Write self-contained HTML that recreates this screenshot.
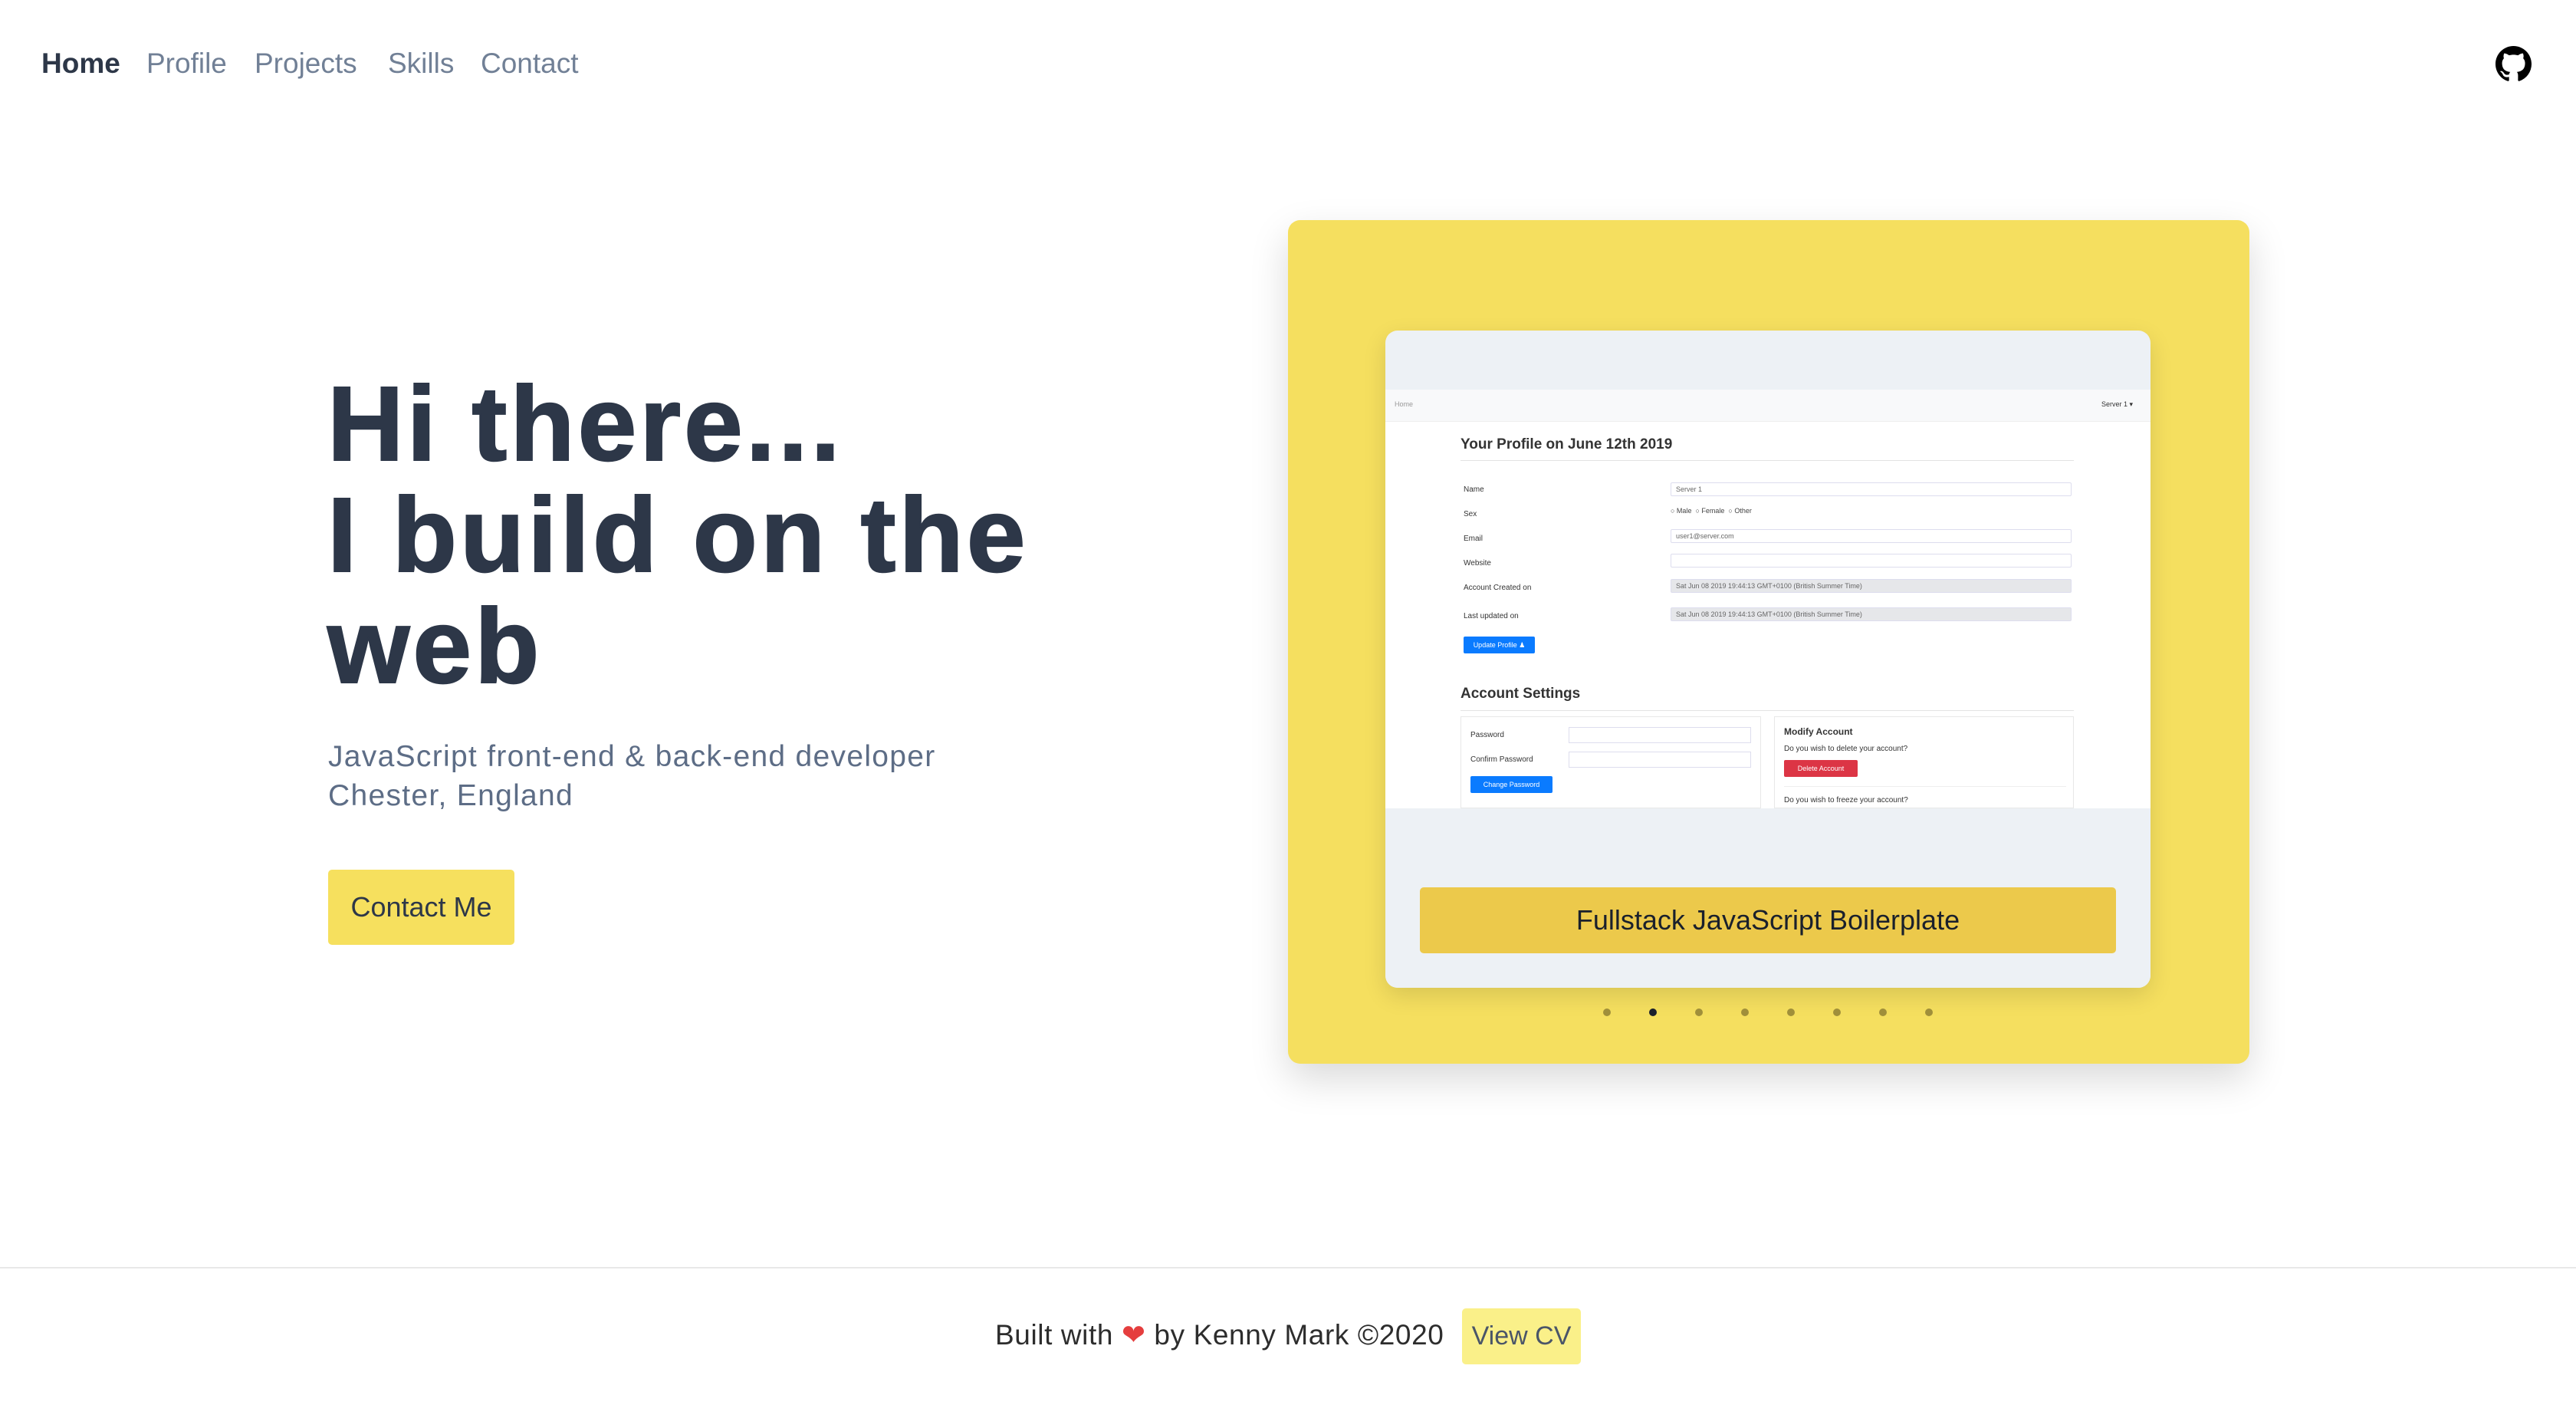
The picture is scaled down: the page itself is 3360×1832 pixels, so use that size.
<!DOCTYPE html>
<html><head><meta charset="utf-8"><style>
*{margin:0;padding:0;box-sizing:border-box}
body{width:3360px;height:1832px;position:relative;background:#fff;font-family:"Liberation Sans",sans-serif;overflow:hidden;color:#2d3748}
.a{position:absolute;white-space:nowrap}
.nav{top:62px;font-size:37px;color:#718096}
h1{position:absolute;left:427px;top:481px;font-size:138px;line-height:145px;font-weight:bold;color:#2d3748;letter-spacing:4px;-webkit-text-stroke:2px #2d3748}
.sub{left:428px;font-size:39px;color:#5d6d86;letter-spacing:1.3px}
.ss{position:absolute;font-family:"Liberation Sans",sans-serif;color:#444}
.lbl{font-size:10px;color:#333}
.inp{position:absolute;left:2179px;width:523px;height:18px;border:1px solid #dde;background:#fff;border-radius:2px;font-size:9px;color:#666;padding:3px 6px}
.dis{background:#e6e7ea}
.dot{position:absolute;top:1315px;width:10px;height:10px;border-radius:50%;background:#a08f3a}
</style></head><body>
<div class="a nav" style="left:54px;color:#2d3748;font-weight:bold">Home</div>
<div class="a nav" style="left:191px">Profile</div>
<div class="a nav" style="left:332px">Projects</div>
<div class="a nav" style="left:506px">Skills</div>
<div class="a nav" style="left:627px">Contact</div>
<svg class="a" style="left:3255px;top:60px" width="47" height="47" viewBox="0 0 16 16"><path fill="#000" d="M8 0C3.58 0 0 3.58 0 8c0 3.54 2.29 6.530 5.47 7.59.4.07.55-.17.55-.38 0-.19-.01-.82-.01-1.49-2.01.37-2.530-.49-2.69-.94-.09-.23-.48-.94-.82-1.13-.28-.15-.68-.52-.01-.53.63-.01 1.08.58 1.23.82.72 1.21 1.87.87 2.33.66.07-.52.28-.87.51-1.07-1.78-.2-3.64-.89-3.64-3.95 0-.87.31-1.59.82-2.15-.08-.2-.36-1.02.08-2.12 0 0 .67-.21 2.2.82.64-.18 1.32-.27 2-.27.68 0 1.36.09 2 .27 1.53-1.04 2.2-.82 2.2-.82.44 1.1.16 1.92.08 2.12.51.56.82 1.27.82 2.15 0 3.07-1.87 3.75-3.65 3.95.29.25.54.73.54 1.48 0 1.07-.01 1.93-.01 2.2 0 .21.15.46.55.38A8.013 8.013 0 0016 8c0-4.42-3.58-8-8-8z"/></svg>

<h1>Hi there...<br>I build on the<br>web</h1>
<div class="a sub" style="top:965px">JavaScript front-end &amp; back-end developer</div>
<div class="a sub" style="top:1016px">Chester, England</div>
<div class="a" style="left:428px;top:1134px;width:243px;height:98px;background:#f6e05e;border-radius:5px;font-size:36px;line-height:98px;text-align:center;color:#2d3748">Contact Me</div>

<div class="a" style="left:1680px;top:287px;width:1254px;height:1100px;background:#f5df5f;border-radius:16px;box-shadow:0 20px 50px rgba(0,0,0,0.15)"></div>
<div class="a" style="left:1807px;top:431px;width:998px;height:857px;background:#edf1f5;border-radius:16px;overflow:hidden;box-shadow:0 10px 30px rgba(0,0,0,0.12)">
  <div style="position:absolute;left:0;top:77px;width:998px;height:546px;background:#fff">
    <div style="height:42px;background:#f8f9fa;border-bottom:1px solid #eee"></div>
  </div>
</div>
<div class="ss" style="left:1819px;top:522px;font-size:9px;color:#999">Home</div>
<div class="ss" style="left:2741px;top:522px;font-size:9px;color:#333">Server 1 ▾</div>
<div class="ss" style="left:1905px;top:569px;font-size:19px;font-weight:bold;color:#333">Your Profile on June 12th 2019</div>
<div class="a" style="left:1905px;top:600px;width:800px;height:1px;background:#e3e3e3"></div>
<div class="ss lbl" style="left:1909px;top:633px">Name</div>
<div class="ss lbl" style="left:1909px;top:665px">Sex</div>
<div class="ss lbl" style="left:1909px;top:697px">Email</div>
<div class="ss lbl" style="left:1909px;top:729px">Website</div>
<div class="ss lbl" style="left:1909px;top:761px">Account Created on</div>
<div class="ss lbl" style="left:1909px;top:798px">Last updated on</div>
<div class="inp" style="top:629px">Server 1</div>
<div class="ss" style="left:2179px;top:661px;font-size:9px">○ Male &nbsp;○ Female &nbsp;○ Other</div>
<div class="inp" style="top:690px">user1@server.com</div>
<div class="inp" style="top:722px"></div>
<div class="inp dis" style="top:755px">Sat Jun 08 2019 19:44:13 GMT+0100 (British Summer Time)</div>
<div class="inp dis" style="top:792px">Sat Jun 08 2019 19:44:13 GMT+0100 (British Summer Time)</div>
<div class="a" style="left:1909px;top:830px;width:93px;height:22px;background:#0a7bff;border-radius:2px;color:#fff;font-size:9px;line-height:22px;text-align:center">Update Profile ♟</div>
<div class="ss" style="left:1905px;top:894px;font-size:19px;font-weight:bold;color:#333">Account Settings</div>
<div class="a" style="left:1905px;top:926px;width:800px;height:1px;background:#e3e3e3"></div>
<div class="a" style="left:1905px;top:934px;width:392px;height:120px;border:1px solid #e8e8e8"></div>
<div class="a" style="left:2314px;top:934px;width:391px;height:120px;border:1px solid #e8e8e8"></div>
<div class="ss lbl" style="left:1918px;top:953px">Password</div>
<div class="ss lbl" style="left:1918px;top:985px">Confirm Password</div>
<div class="a" style="left:2046px;top:948px;width:238px;height:21px;border:1px solid #dde"></div>
<div class="a" style="left:2046px;top:980px;width:238px;height:21px;border:1px solid #dde"></div>
<div class="a" style="left:1918px;top:1012px;width:107px;height:22px;background:#0a7bff;border-radius:2px;color:#fff;font-size:9px;line-height:22px;text-align:center">Change Password</div>
<div class="ss" style="left:2327px;top:947px;font-size:12px;font-weight:bold;color:#333">Modify Account</div>
<div class="ss lbl" style="left:2327px;top:971px">Do you wish to delete your account?</div>
<div class="a" style="left:2327px;top:991px;width:96px;height:22px;background:#dc3545;border-radius:2px;color:#fff;font-size:9px;line-height:22px;text-align:center">Delete Account</div>
<div class="a" style="left:2327px;top:1025px;width:368px;height:1px;background:#eee"></div>
<div class="ss lbl" style="left:2327px;top:1038px">Do you wish to freeze your account?</div>
<div class="a" style="left:1807px;top:1054px;width:998px;height:234px;background:#edf1f5;border-radius:0 0 16px 16px"></div>
<div class="a" style="left:1852px;top:1157px;width:908px;height:86px;background:#ecc94b;border-radius:5px;font-size:36px;line-height:86px;text-align:center;color:#1a202c">Fullstack JavaScript Boilerplate</div>
<div class="dot" style="left:2091px"></div><div class="dot" style="left:2151px;background:#1a202c"></div><div class="dot" style="left:2211px"></div><div class="dot" style="left:2271px"></div><div class="dot" style="left:2331px"></div><div class="dot" style="left:2391px"></div><div class="dot" style="left:2451px"></div><div class="dot" style="left:2511px"></div>

<div class="a" style="left:0;top:1652px;width:3360px;height:2px;background:#e8e8e8"></div>
<div class="a" style="left:1298px;top:1719px;font-size:37px;color:#2d2d2d;letter-spacing:0.6px">Built with <span style="color:#e53e3e">❤</span> by Kenny Mark ©2020</div>
<div class="a" style="left:1907px;top:1706px;width:155px;height:73px;background:#faf089;border-radius:5px;font-size:34px;line-height:73px;text-align:center;color:#4a5568">View CV</div>
</body></html>
